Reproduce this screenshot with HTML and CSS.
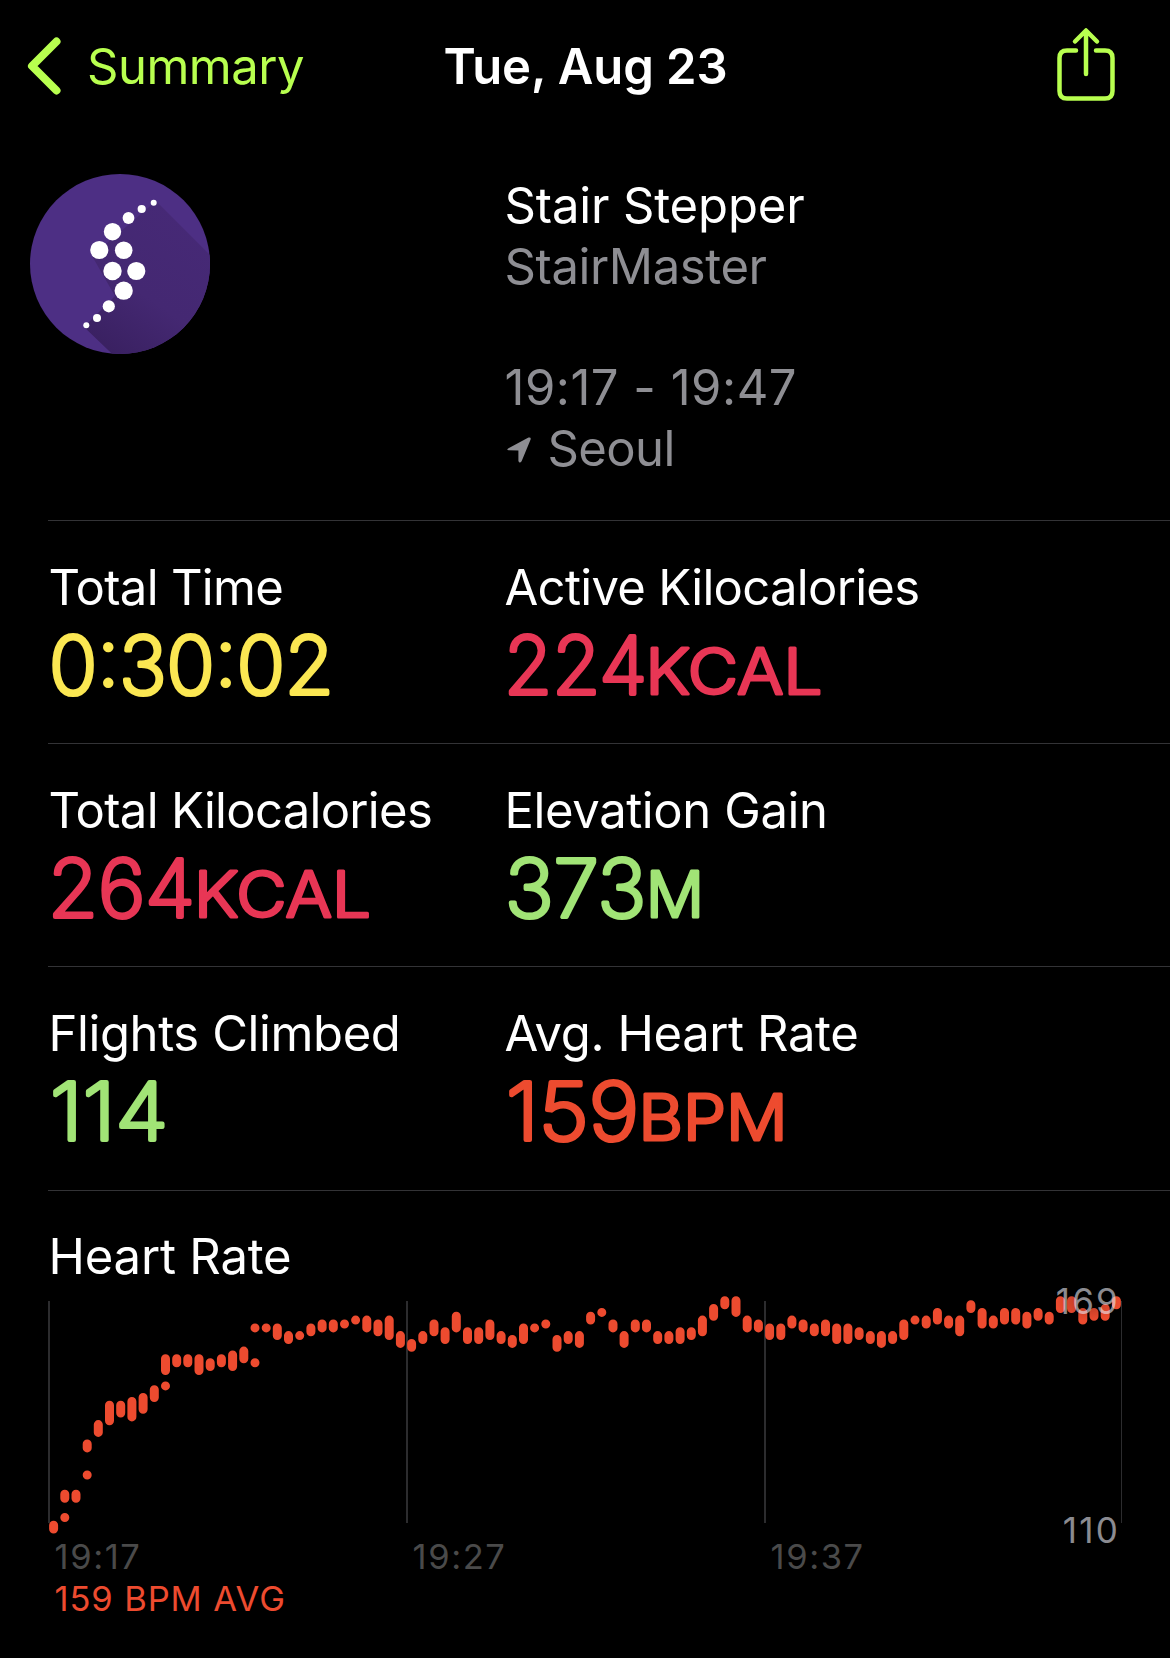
FILE: index.html
```html
<!DOCTYPE html>
<html lang="en">
	<head>
		<meta charset="UTF-8" />
		<meta name="viewport" content="width=device-width, initial-scale=1.0" />
		<title>Workout</title>
		<link rel="stylesheet" href="styles.css">
	</head>
	<body>
		<header class="nav">
			<a class="back" href="#">
				<svg width="34" height="58" viewBox="0 0 34 58"><path d="M29.5 4.5 L5 29 L29.5 53.5" /></svg>
				<span>Summary</span>
			</a>
			<h1>Tue, Aug 23</h1>
			<a class="share" href="#">
				<svg width="58" height="74" viewBox="0 0 58 74">
					<path d="M19 23.5 H10 Q2.5 23.5 2.5 31 V64 Q2.5 71.5 10 71.5 H48 Q55.5 71.5 55.5 64 V31 Q55.5 23.5 48 23.5 H39" />
					<path d="M29 47 V4 M18 14.5 L29 3.5 L40 14.5" />
				</svg>
			</a>
		</header>

		<section class="intro">
			<svg class="badge" width="180" height="180" viewBox="0 0 180 180">
				<defs>
					<clipPath id="disc"><circle cx="90" cy="90" r="90" /></clipPath>
					<linearGradient id="shade" gradientUnits="userSpaceOnUse" x1="150" y1="40" x2="60" y2="170">
						<stop offset="0" stop-color="#462976" />
						<stop offset=".55" stop-color="#442872" />
						<stop offset="1" stop-color="#392060" />
					</linearGradient>
				</defs>
				<g clip-path="url(#disc)">
					<rect width="180" height="180" fill="#4d2f84" />
					<path d="M126 27 L220 121 V220 H124 L54 153 L85 122 L62 82 Z" fill="url(#shade)" />
				</g>
				<g fill="#fff">
					<circle cx="123.7" cy="28.7" r="3" />
					<circle cx="111.7" cy="35" r="4.1" />
					<circle cx="98.5" cy="44" r="5.9" />
					<circle cx="82.5" cy="57.7" r="8.7" />
					<circle cx="69.3" cy="76" r="9.1" />
					<circle cx="93.7" cy="76.3" r="8.8" />
					<circle cx="82.5" cy="97" r="9.2" />
					<circle cx="106.3" cy="97" r="9.1" />
					<circle cx="93.7" cy="116.7" r="9.1" />
					<circle cx="78.8" cy="132.3" r="6.1" />
					<circle cx="67" cy="144" r="4" />
					<circle cx="56.3" cy="151.3" r="3" />
				</g>
			</svg>
			<div class="info">
				<p class="name">Stair Stepper</p>
				<p class="device">StairMaster</p>
				<p class="time">19:17 - 19:47</p>
				<p class="place">
					<svg width="24" height="26" viewBox="0 0 24 26"><path d="M1.5 11.2 L21.5 .6 Q24.2 -.2 23.6 2.4 L14.6 24.3 Q12.6 27 11.4 24 V13.4 L1.6 13.2 Q-1 12.6 1.5 11.2 Z" /></svg>
					<span>Seoul</span>
				</p>
			</div>
		</section>

		<main>
			<section class="row">
				<div>
					<h2 class="tight">Total Time</h2>
					<svg class="value yellow" width="400" height="90"><text x="-1" y="75.5" textLength="285" lengthAdjust="spacingAndGlyphs">0:30:02</text></svg>
				</div>
				<div>
					<h2 class="tight">Active Kilocalories</h2>
					<svg class="value red" width="400" height="90"><text x="-2" y="75.5" textLength="143" lengthAdjust="spacingAndGlyphs">224</text><text class="unit" x="139.5" y="75.5" textLength="177" lengthAdjust="spacingAndGlyphs">KCAL</text></svg>
				</div>
			</section>
			<section class="row">
				<div>
					<h2 class="tight">Total Kilocalories</h2>
					<svg class="value red" width="400" height="90"><text x="-2" y="75.5" textLength="147" lengthAdjust="spacingAndGlyphs">264</text><text class="unit" x="144" y="75.5" textLength="177" lengthAdjust="spacingAndGlyphs">KCAL</text></svg>
				</div>
				<div>
					<h2 class="snug">Elevation Gain</h2>
					<svg class="value green" width="400" height="90"><text x="-1" y="75.5" textLength="141" lengthAdjust="spacingAndGlyphs">373</text><text class="unit" x="140" y="75.5" textLength="58" lengthAdjust="spacingAndGlyphs">M</text></svg>
				</div>
			</section>
			<section class="row">
				<div>
					<h2 class="snug">Flights Climbed</h2>
					<svg class="value green" width="400" height="90"><text x="0" y="75.5" textLength="118" lengthAdjust="spacingAndGlyphs">114</text></svg>
				</div>
				<div>
					<h2 class="snug">Avg. Heart Rate</h2>
					<svg class="value orange" width="400" height="90"><text x="0" y="75.5" textLength="133" lengthAdjust="spacingAndGlyphs">159</text><text class="unit" x="132.5" y="75.5" textLength="149" lengthAdjust="spacingAndGlyphs">BPM</text></svg>
				</div>
			</section>

			<section class="heart">
				<h2>Heart Rate</h2>
				<div class="chart">
					<svg width="1122" height="246" viewBox="48 1290 1122 246">
						<path class="grid" d="M49 1301 V1523 M407 1301 V1523 M765 1301 V1523" />
						<path class="grid thin" d="M1121.5 1301 V1523" />
						<path class="bars" id="bars" />
					</svg>
					<span class="max">169</span>
					<span class="min">110</span>
				</div>
				<div class="hours">
					<span>19:17</span>
					<span>19:27</span>
					<span>19:37</span>
				</div>
				<p class="avg">159 BPM AVG</p>
			</section>
		</main>

		<script>
			// [high, low] bpm of every slot, a third value is a separate dot
			const rates = [
				[111, 110], [119, 118, 113], [119, 118], [132, 131, 124], [137, 135], [142, 138], [142, 140], [143, 139],
				[144, 141], [146, 144], [154, 151, 147], [154, 153], [154, 153], [154, 151], [153, 152], [154, 153],
				[155, 152], [156, 154], [162, 162, 153], [162, 162], [162, 160], [160, 159], [160, 160], [162, 161],
				[163, 162], [163, 162], [163, 163], [164, 164], [164, 162], [163, 161], [164, 160], [160, 158],
				[158, 157], [160, 159], [163, 161], [161, 159], [165, 162], [161, 159], [161, 159], [163, 160],
				[160, 159], [159, 158], [162, 159], [162, 162], [163, 163], [159, 157], [160, 159], [160, 158],
				[165, 164], [166, 166], [163, 162], [160, 158], [163, 162], [163, 162], [160, 159], [160, 159],
				[161, 159], [161, 160], [164, 161], [167, 165], [169, 168], [169, 166], [164, 162], [163, 162],
				[162, 160], [162, 160], [164, 163], [163, 162], [162, 161], [163, 161], [162, 159], [162, 159],
				[161, 160], [160, 159], [160, 158], [160, 159], [163, 160], [164, 164], [164, 163], [166, 164],
				[164, 163], [164, 161], [168, 167], [166, 163], [164, 163], [166, 164], [166, 164], [165, 163],
				[166, 165], [165, 164], [169, 167], [169, 167], [166, 164], [166, 165], [167, 165], [169, 168]
			];

			const y = (bpm) => (1300.8 + (169 - bpm) * 3.87).toFixed(1);

			let d = "";
			rates.forEach(([high, low, dot], i) => {
				const x = (53.6 + i * 11.187).toFixed(1);
				d += `M${x} ${y(high)}V${y(low)}`;
				if (dot) {
					d += `M${x} ${y(dot)}V${y(dot)}`;
				}
			});
			document.getElementById("bars").setAttribute("d", d);
		</script>
	</body>
</html>
```
FILE: styles.css
```css
* {
	margin: 0;
	padding: 0;
	box-sizing: border-box;
}

body {
	width: 1170px;
	height: 1658px;
	overflow: hidden;
	background-color: #000;
	color: #fff;
	font-family: Inter, "Liberation Sans", sans-serif;
	font-size: 49px;
	line-height: 61px;
}

svg {
	display: block;
}

a {
	color: #b8ff4f;
	text-decoration: none;
}

h1,
h2 {
	font-size: 49px;
	font-weight: 400;
	white-space: nowrap;
}

h2 {
	margin-left: -1.5px;
	letter-spacing: -0.2px;
}

.tight {
	letter-spacing: -0.7px;
}

.snug {
	letter-spacing: -0.4px;
}

.nav {
	display: grid;
	grid-template-columns: 1fr auto 1fr;
	align-items: center;
	height: 132px;
	padding: 0 27px;
}

.nav path {
	fill: none;
	stroke: #b8ff4f;
	stroke-linecap: round;
	stroke-linejoin: round;
}

.back {
	display: flex;
	align-items: center;
	gap: 26px;
	letter-spacing: -0.5px;
}

.back path {
	stroke-width: 8;
}

.nav h1 {
	padding-left: 1px;
	font-weight: 600;
	letter-spacing: -0.1px;
}

.share {
	justify-self: end;
	margin: 0 28px 4px 0;
}

.share path {
	stroke-width: 4.5;
}

.intro {
	display: flex;
	height: 388px;
	padding: 42px 0 0 30px;
}

.info {
	margin-left: 294.5px;
	padding-top: 1px;
	color: #8e8e93;
}

.name {
	color: #fff;
	letter-spacing: -0.15px;
}

.device {
	letter-spacing: -0.4px;
}

.time {
	margin-top: 60px;
	letter-spacing: 0.5px;
}

.place {
	display: flex;
	align-items: center;
	gap: 17px;
	letter-spacing: -0.6px;
}

.place svg {
	margin: 3px 0 0 2px;
	fill: #8e8e93;
}

main {
	margin-left: 48px;
}

.row {
	display: grid;
	grid-template-columns: 456px 1fr;
	height: 223.2px;
	padding: 36px 0 0 2px;
	border-top: 1px solid #333336;
}

.value {
	overflow: visible;
	font-size: 80px;
	font-weight: 200;
	stroke-width: 4.2;
	stroke-linejoin: round;
}

.value .unit {
	font-size: 62.5px;
	font-weight: 300;
	stroke-width: 3;
}

.yellow {
	fill: #fbe752;
	stroke: #fbe752;
}

.red {
	fill: #e83655;
	stroke: #e83655;
}

.green {
	fill: #a1e476;
	stroke: #a1e476;
}

.orange {
	fill: #ed4b2f;
	stroke: #ed4b2f;
}

.heart {
	padding-top: 35px;
	border-top: 1px solid #333336;
}

.heart h2 {
	padding-left: 2px;
}

.chart {
	position: relative;
	height: 246px;
	margin-top: 3px;
}

.grid {
	fill: none;
	stroke: #2c2c2e;
	stroke-width: 2;
}

.thin {
	stroke-width: 1;
}

.bars {
	fill: none;
	stroke: #ed4b2f;
	stroke-width: 9;
	stroke-linecap: round;
}

/* scale labels lie over the bars */
.max,
.min {
	position: absolute;
	right: 50px;
	color: rgba(235, 235, 245, 0.6);
	font-size: 35px;
	letter-spacing: 2.2px;
	line-height: 40px;
}

.max {
	top: -9px;
	background: radial-gradient(closest-side, rgba(0, 0, 0, 0.25), transparent);
}

.min {
	top: 220px;
}

.hours {
	display: grid;
	grid-template-columns: 358px 358px 1fr;
	padding-left: 6.5px;
	color: #4a4a4a;
	font-size: 34.5px;
	letter-spacing: 1.6px;
	line-height: 42px;
}

.avg {
	padding-left: 6.5px;
	color: #ed4b2f;
	font-size: 34.5px;
	letter-spacing: 0.9px;
	line-height: 42px;
}
```
